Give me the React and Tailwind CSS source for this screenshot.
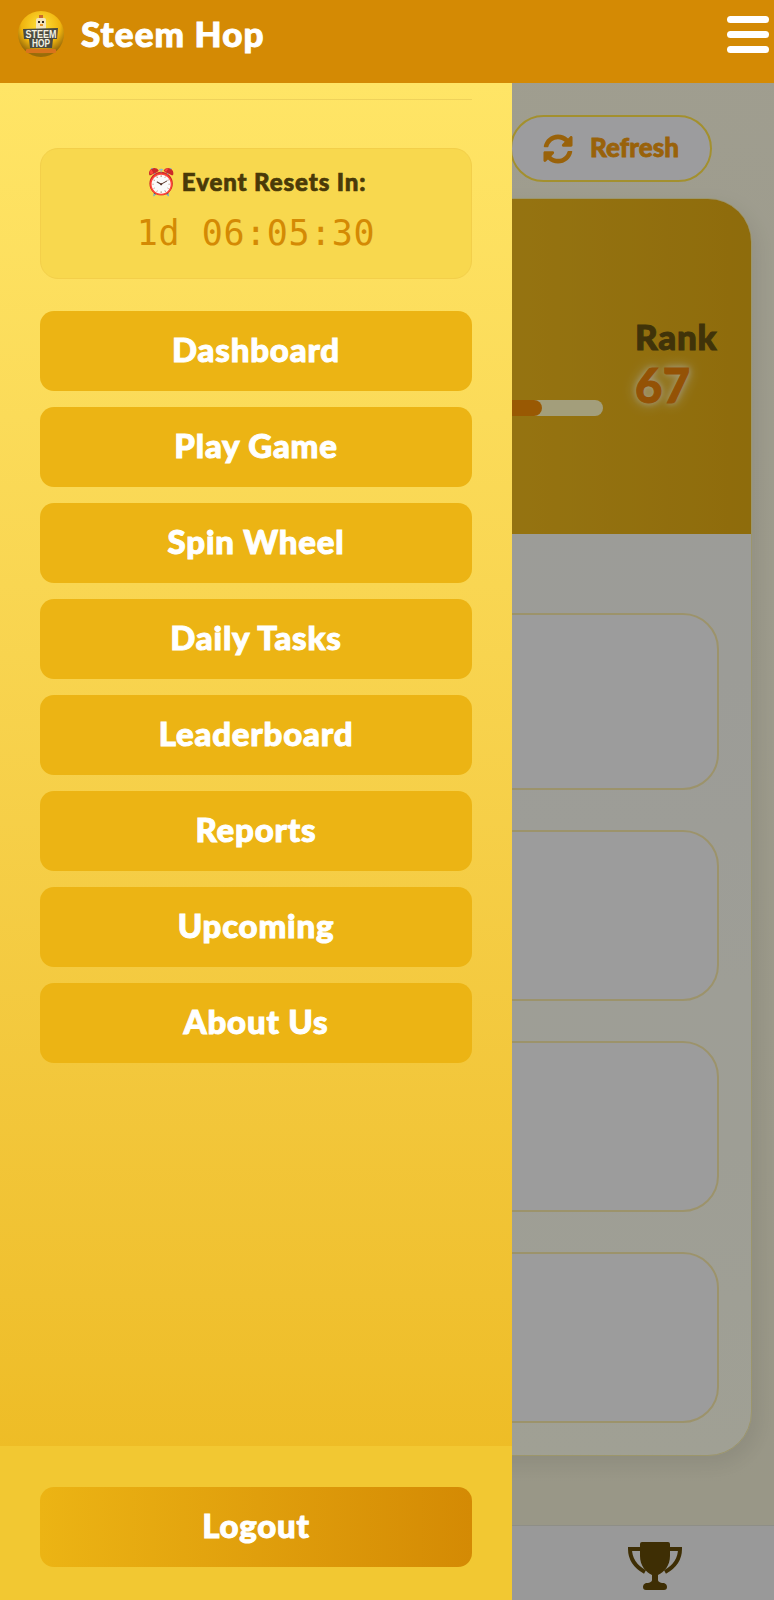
import React from "react";
import { FaSyncAlt } from "react-icons/fa";

const display = "font-['Lato','Noto_Sans',sans-serif] font-black";
const menu = ["Dashboard", "Play Game", "Spin Wheel", "Daily Tasks", "Leaderboard", "Reports", "Upcoming", "About Us"];

function Logo() {
  return (
    <svg width="48" height="48" viewBox="0 0 48 48" className="shrink-0">
      <defs>
        <radialGradient id="lg" cx="50%" cy="32%" r="62%">
          <stop offset="0%" stopColor="#ffe23a" />
          <stop offset="68%" stopColor="#f0b40e" />
          <stop offset="100%" stopColor="#9a6c0a" />
        </radialGradient>
      </defs>
      <circle cx="24" cy="23" r="23" fill="url(#lg)" />
      <rect x="19" y="7" width="10" height="12" rx="2" fill="#f3e4bc" />
      <rect x="22" y="4" width="4" height="3" fill="#c9682a" />
      <rect x="21" y="10" width="2" height="2" fill="#33261a" />
      <rect x="25" y="10" width="2" height="2" fill="#33261a" />
      <rect x="23" y="13" width="3" height="2" fill="#e8942a" />
      <path d="M6 18 L41 17 L40 28 L36 28 L35 37 L13 37 L12 28 L7 28 Z" fill="#4a4a40" />
      <text x="24" y="26.5" textAnchor="middle" fontFamily="Liberation Sans, sans-serif" fontWeight="700" fontSize="10" fill="#f4f1e2" textLength="31" lengthAdjust="spacingAndGlyphs">STEEM</text>
      <text x="24" y="36" textAnchor="middle" fontFamily="Liberation Sans, sans-serif" fontWeight="700" fontSize="10" fill="#f4f1e2" textLength="18" lengthAdjust="spacingAndGlyphs">HOP</text>
      <rect x="9" y="38" width="30" height="4" rx="1" fill="#d9731c" />
    </svg>
  );
}

function Trophy() {
  return (
    <svg width="54" height="48" viewBox="0 0 54 48" fill="#624907">
      <path d="M12 2 Q12 0 14 0 H40 Q42 0 42 2 V14 C42 24 36 30 30 33 V38 Q30 40 34 41 H36 Q39 42 39 45 Q39 48 36 48 H18 Q15 48 15 45 Q15 42 18 41 H20 Q24 40 24 38 V33 C18 30 12 24 12 14 Z" />
      <path d="M13 7 H2 C2 18 8 25 17 30 M41 7 H52 C52 18 46 25 37 30" fill="none" stroke="#624907" strokeWidth="4" />
    </svg>
  );
}

export default function App() {
  return (
    <div className="relative flex h-[1600px] w-[774px] flex-col overflow-hidden bg-gradient-to-b from-[#faf7e1] to-[#efecd3]">
      <header className="relative z-30 flex h-[83px] shrink-0 items-center bg-[#d48a04] pb-[14px] pl-[17px] pr-[5px]">
        <Logo />
        <span className={`${display} ml-[16px] pb-[2px] text-[35px] leading-none tracking-[1.1px] text-white [-webkit-text-stroke:1px_#ffffff]`}>Steem Hop</span>
        <div className="ml-auto flex w-[42px] flex-col gap-[8px]">
          <span className="h-[7px] rounded-full bg-white" />
          <span className="h-[7px] rounded-full bg-white" />
          <span className="h-[7px] rounded-full bg-white" />
        </div>
      </header>

      <main className="flex min-h-0 flex-1 flex-col">
        <div className="flex justify-end pr-[62px] pt-[32px]">
          <button className="flex h-[67px] w-[202px] items-center justify-center gap-[17px] rounded-full border-2 border-[#ffe149] bg-[#f5f5f8] text-[#f09a10]">
            <FaSyncAlt className="text-[30px]" />
            <span className={`${display} pb-[2px] text-[26px] [-webkit-text-stroke:0.8px_#f09a10]`}>Refresh</span>
          </button>
        </div>

        <section className="mx-[22px] mt-[16px] flex h-[1258px] flex-col overflow-hidden rounded-[44px] border border-[#f5eba8] bg-gradient-to-b from-[#f2f2f0] to-[#fafae8] shadow-[6px_8px_22px_rgba(0,0,0,0.08)]">
          <div className="flex h-[335px] shrink-0 items-start bg-gradient-to-r from-[#dfbf29] via-[#f0bb1f] to-[#dfa913] pl-[24px] pr-[32px] pt-[115px]">
            <div className="mr-[32px] mt-[86px] h-[16px] flex-1 overflow-hidden rounded-full bg-[#fff8c0]">
              <div className="h-full w-[89%] rounded-full bg-[#f08c06]" />
            </div>
            <div className="w-[84px]">
              <div className={`${display} text-[35px] leading-[44px] tracking-[0.8px] text-[#64510f] [-webkit-text-stroke:1px_#64510f]`}>Rank</div>
              <div className={`${display} mt-[2px] text-[47px] leading-[50px] tracking-[0.5px] text-[#e88008] [-webkit-text-stroke:1px_#e88008] [text-shadow:0_0_6px_#fff8d8,0_0_14px_#fff3c0]`}>67</div>
            </div>
          </div>
          <div className="flex flex-col gap-[40px] pl-[24px] pr-[32px] pt-[79px]">
            <div className="h-[177px] rounded-[36px] border-2 border-[#f5e6a8] bg-[#f4f4f4]" />
            <div className="h-[171px] rounded-[36px] border-2 border-[#f5e6a8] bg-[#f4f4f4]" />
            <div className="h-[171px] rounded-[36px] border-2 border-[#f5e6a8] bg-[#f4f4f4]" />
            <div className="h-[171px] rounded-[36px] border-2 border-[#f5e6a8] bg-[#f4f4f4]" />
          </div>
        </section>

        <nav className="mt-auto flex h-[75px] shrink-0 items-start justify-end border-t border-[#dfdfd4] bg-[#f0f0f0] pr-[92px] pt-[16px]">
          <Trophy />
        </nav>
      </main>

      <div className="absolute inset-0 z-10 bg-black/[0.36]" />

      <aside className="absolute bottom-0 left-0 top-[83px] z-20 flex w-[512px] flex-col bg-gradient-to-b from-[#ffe566] to-[#ecb81a]">
        <div className="flex flex-1 flex-col px-[40px] pt-[16px]">
          <div className="h-px bg-[#efd25a]" />
          <div className="mt-[48px] flex h-[131px] flex-col items-center rounded-[18px] border border-[#f3cf4a] bg-[#f8d84e] pt-[17px]">
            <div className={`${display} flex items-center gap-[3px] text-[24px] leading-[32px] tracking-[0.9px] text-[#4a3a08] [-webkit-text-stroke:0.7px_#4a3a08]`}>
              <span className="font-['Noto_Color_Emoji','DejaVu_Sans',sans-serif] text-[26px] font-normal text-[#e0352b] [-webkit-text-stroke:0]">⏰</span>
              Event Resets In:
            </div>
            <div className="mt-[13px] font-['DejaVu_Sans_Mono',monospace] text-[35px] leading-[44px] tracking-[0.6px] text-[#d48a04]">1d 06:05:30</div>
          </div>
          <div className="mt-[32px] flex flex-col gap-[16px]">
            {menu.map((m) => (
              <button key={m} className={`${display} h-[80px] rounded-[14px] bg-[#ecb414] pb-[2px] text-[33px] tracking-[0.8px] text-white [-webkit-text-stroke:1px_#ffffff]`}>{m}</button>
            ))}
          </div>
        </div>
        <div className="flex h-[154px] shrink-0 items-start bg-[#f2c832] px-[40px] pt-[41px]">
          <button className={`${display} h-[80px] w-full rounded-[14px] bg-gradient-to-r from-[#ecb414] to-[#d48a04] pb-[2px] text-[33px] tracking-[0.8px] text-white [-webkit-text-stroke:1px_#ffffff]`}>Logout</button>
        </div>
      </aside>
    </div>
  );
}
